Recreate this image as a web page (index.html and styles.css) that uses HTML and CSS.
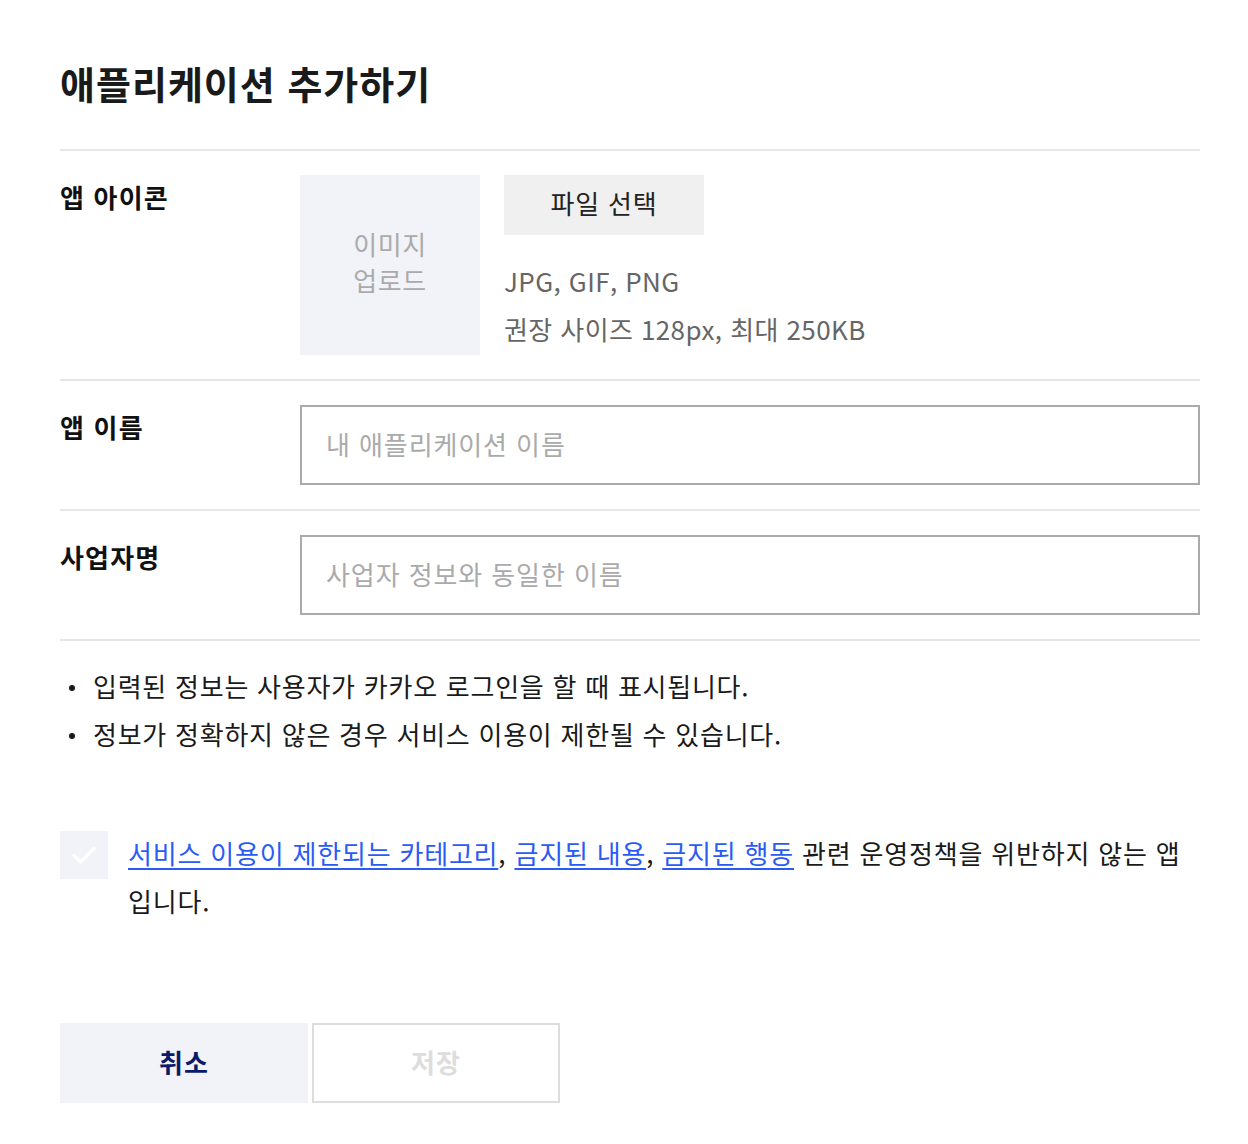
FILE: index.html
```html
<!DOCTYPE html>
<html lang="ko">
<head>
<meta charset="utf-8">
<title>애플리케이션 추가하기</title>
<link rel="stylesheet" href="styles.css">
</head>
<body>
<div class="page">
  <h1 class="title">애플리케이션 추가하기</h1>

  <div class="row row-icon">
    <div class="label">앱 아이콘</div>
    <div class="field icon-field">
      <div class="icon-box">이미지<br>업로드</div>
      <div class="icon-info">
        <button class="file-btn" type="button">파일 선택</button>
        <p class="spec">JPG, GIF, PNG<br>권장 사이즈 128px, 최대 250KB</p>
      </div>
    </div>
  </div>

  <div class="row">
    <div class="label">앱 이름</div>
    <div class="field"><input class="text-input" type="text" placeholder="내 애플리케이션 이름"></div>
  </div>

  <div class="row">
    <div class="label">사업자명</div>
    <div class="field"><input class="text-input" type="text" placeholder="사업자 정보와 동일한 이름"></div>
  </div>

  <ul class="notes">
    <li>입력된 정보는 사용자가 카카오 로그인을 할 때 표시됩니다.</li>
    <li>정보가 정확하지 않은 경우 서비스 이용이 제한될 수 있습니다.</li>
  </ul>

  <div class="agree">
    <span class="checkbox">
      <svg width="48" height="48" viewBox="0 0 48 48"><path d="M14 24.5l6.5 6.5L34 17.5" fill="none" stroke="#ffffff" stroke-width="3.2" stroke-linecap="round" stroke-linejoin="round"/></svg>
    </span>
    <p class="agree-text"><a href="#">서비스 이용이 제한되는 카테고리</a>, <a href="#">금지된 내용</a>, <a href="#">금지된 행동</a> 관련 운영정책을 위반하지 않는 앱 입니다.</p>
  </div>

  <div class="actions">
    <button class="btn btn-cancel" type="button">취소</button>
    <button class="btn btn-save" type="button">저장</button>
  </div>
</div>
</body>
</html>
```

FILE: styles.css
```css
* { box-sizing: border-box; }
html, body { margin: 0; padding: 0; background: #fff; }
body {
  font-family: "Noto Sans CJK KR", "Noto Sans", sans-serif;
  color: #1a1a1a;
}
.page {
  width: 1140px;
  margin-left: 60px;
  padding-top: 56px;
}
.title {
  margin: 0 0 39px;
  font-size: 38px;
  line-height: 54px;
  font-weight: 700;
  color: #1a1a1a;
  letter-spacing: 1px;
}
.row {
  display: flex;
  border-top: 2px solid #e6e6e6;
  padding: 24px 0;
}
.label {
  width: 240px;
  flex: none;
  font-size: 26px;
  font-weight: 700;
  line-height: 44px;
  letter-spacing: 1.2px;
  color: #111;
}
.field { flex: 1; display: flex; }
.icon-field { gap: 24px; }
.icon-box {
  width: 180px;
  height: 180px;
  background: #f2f3f8;
  color: #aaaaaa;
  font-size: 26px;
  line-height: 36px;
  letter-spacing: 0.6px;
  display: flex;
  align-items: center;
  justify-content: center;
  text-align: center;
  padding-bottom: 6px;
}
.icon-info { display: flex; flex-direction: column; align-items: flex-start; }
.file-btn {
  width: 200px;
  height: 60px;
  border: 0;
  background: #f0f0f0;
  font-family: inherit;
  font-size: 26px;
  letter-spacing: 0.8px;
  color: #222;
  padding: 0 0 6px;
}
.spec {
  margin: 22px 0 0;
  font-size: 26px;
  line-height: 48px;
  letter-spacing: 0.4px;
  color: #666;
}
.text-input {
  width: 100%;
  height: 80px;
  border: 2px solid #aaaaaa;
  border-radius: 0;
  padding: 0 24px 4px;
  font-family: inherit;
  font-size: 26px;
  letter-spacing: 0.9px;
  color: #222;
  outline: none;
}
.text-input::placeholder { color: #aaaaaa; }
.notes {
  list-style: none;
  margin: 0;
  padding: 21px 0 0;
  border-top: 2px solid #e6e6e6;
}
.notes li {
  position: relative;
  padding-left: 33px;
  font-size: 26px;
  line-height: 48px;
  letter-spacing: 0.75px;
  color: #1a1a1a;
}
.notes li::before {
  content: "";
  position: absolute;
  left: 9px;
  top: 23px;
  width: 6px;
  height: 6px;
  border-radius: 50%;
  background: #1a1a1a;
}
.agree {
  display: flex;
  align-items: flex-start;
  gap: 20px;
  margin-top: 71px;
}
.checkbox {
  flex: none;
  width: 48px;
  height: 48px;
  margin-top: 2px;
  background: #f2f3f8;
  display: block;
}
.checkbox svg { display: block; }
.agree-text {
  margin: 0;
  font-size: 26px;
  line-height: 48px;
  letter-spacing: 0.8px;
  color: #1a1a1a;
  word-break: keep-all;
}
.agree-text a { color: #2b5bf5; text-decoration: underline; text-underline-offset: 4px; }
.actions {
  display: flex;
  gap: 4px;
  margin-top: 98px;
}
.btn {
  width: 248px;
  height: 80px;
  font-family: inherit;
  font-size: 26px;
  font-weight: 700;
  letter-spacing: 1px;
  padding: 0 0 4px;
}
.btn-cancel { background: #f2f3f8; border: 0; color: #0b1b6b; }
.btn-save { background: #fff; border: 2px solid #dddddd; color: #dddddd; }
```
